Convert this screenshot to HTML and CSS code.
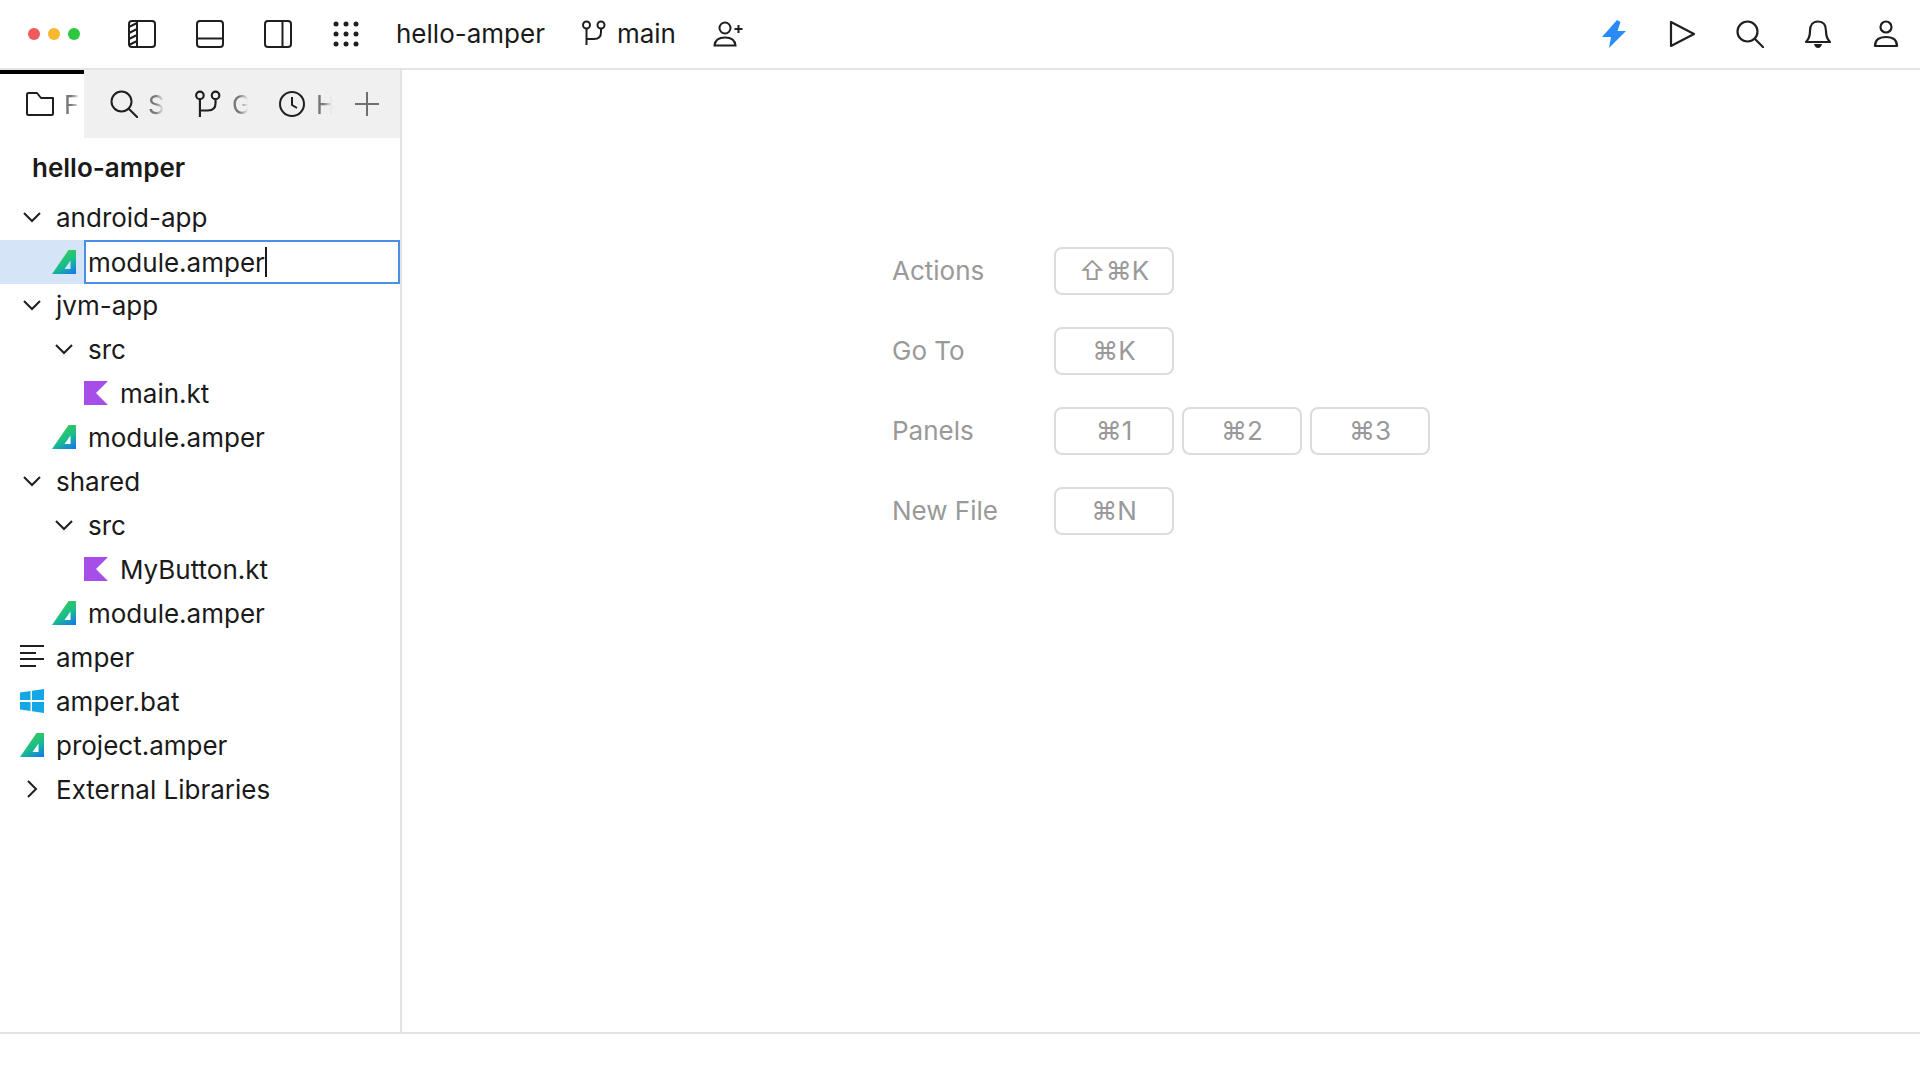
FILE: index.html
```html
<!DOCTYPE html>
<html lang="en">
<head>
<meta charset="utf-8">
<title>hello-amper</title>
<link rel="stylesheet" href="styles.css">
</head>
<body>
<svg class="defs" width="0" height="0" aria-hidden="true">
  <defs>
    <linearGradient id="amp" x1="0.35" y1="0.1" x2="0.9" y2="1">
      <stop offset="0" stop-color="#3ccb55"/>
      <stop offset="0.5" stop-color="#18bd8c"/>
      <stop offset="1" stop-color="#1578f2"/>
    </linearGradient>
    <symbol id="amper" viewBox="0 0 24 24"><path fill="url(#amp)" fill-rule="evenodd" d="M0 24 16.500 0H24V24ZM12.500 19H18.500V10.500Z"/></symbol>
    <symbol id="kotlin" viewBox="0 0 24 24"><path fill="#a64fe8" d="M0 0H24L12 12 24 24H0Z"/></symbol>
    <symbol id="down" viewBox="0 0 24 24"><path fill="none" stroke="#1f1f1f" stroke-width="2" d="M4 8 12 16 20 8"/></symbol>
    <symbol id="right" viewBox="0 0 24 24"><path fill="none" stroke="#1f1f1f" stroke-width="2" d="M8 4 16 12 8 20"/></symbol>
    <symbol id="branch" viewBox="0 0 26 26"><g fill="none" stroke="#1f1f1f" stroke-width="2"><circle cx="5.500" cy="5" r="3.500"/><circle cx="20" cy="5" r="3.500"/><path d="M5.500 8.500V25M5.500 19H13Q20 19 20 12V8.500"/></g></symbol>
  </defs>
</svg>
<div class="app">
  <header class="titlebar">
    <div class="lights"><i class="light red"></i><i class="light amber"></i><i class="light green"></i></div>
    <div class="panel-icons">
      <svg class="ico" viewBox="0 0 28 28"><g fill="none" stroke="#1f1f1f" stroke-width="2"><rect x="1" y="1" width="26" height="26" rx="3"/><path d="M9 1V27M1 7 9 3M1 13 9 9M1 19 9 15M1 25 9 21"/></g></svg>
      <svg class="ico" viewBox="0 0 28 28"><g fill="none" stroke="#1f1f1f" stroke-width="2"><rect x="1" y="1" width="26" height="26" rx="3"/><path d="M1 18.500H27"/></g></svg>
      <svg class="ico" viewBox="0 0 28 28"><g fill="none" stroke="#1f1f1f" stroke-width="2"><rect x="1" y="1" width="26" height="26" rx="3"/><path d="M18.500 1V27"/></g></svg>
      <svg class="ico" viewBox="0 0 28 28"><g fill="#1f1f1f"><circle cx="4" cy="4" r="2.500"/><circle cx="14" cy="4" r="2.500"/><circle cx="24" cy="4" r="2.500"/><circle cx="4" cy="14" r="2.500"/><circle cx="14" cy="14" r="2.500"/><circle cx="24" cy="14" r="2.500"/><circle cx="4" cy="24" r="2.500"/><circle cx="14" cy="24" r="2.500"/><circle cx="24" cy="24" r="2.500"/></g></svg>
    </div>
    <span class="project">hello-amper</span>
    <span class="branch"><svg class="ico-branch"><use href="#branch"/></svg>main</span>
    <svg class="ico add-user" viewBox="0 0 32 28"><g fill="none" stroke="#1f1f1f" stroke-width="2"><circle cx="12" cy="8" r="5.500"/><path d="M1.500 25.500C2 20 6 17.500 12 17.500 18 17.500 22 20 22.500 25.500ZM25.500 5V13M21.500 9H29.500"/></g></svg>
    <div class="spacer"></div>
    <div class="tools">
      <svg class="ico" viewBox="0 0 28 28"><path fill="#2a8af6" d="M17 0 2 17H11L9 28 26 11H17.500L20.500 2Z"/></svg>
      <svg class="ico" viewBox="0 0 28 28"><path fill="none" stroke="#1f1f1f" stroke-width="2.200" stroke-linejoin="round" d="M3 2V26L26 14Z"/></svg>
      <svg class="ico" viewBox="0 0 28 28"><g fill="none" stroke="#1f1f1f" stroke-width="2.200"><circle cx="11.500" cy="11.500" r="10"/><path d="M18.500 18.500 28 28"/></g></svg>
      <svg class="ico" viewBox="0 0 28 28"><path fill="none" stroke="#1f1f1f" stroke-width="2.200" stroke-linejoin="round" d="M2 22C5 19 6 16 6 11 6 5 9 1.500 14 1.500S22 5 22 11C22 16 23 19 26 22Z"/><path fill="#1f1f1f" d="M10 24H18Q17 28 14 28T10 24Z"/></svg>
      <svg class="ico" viewBox="0 0 28 28"><g fill="none" stroke="#1f1f1f" stroke-width="2.200"><circle cx="14" cy="7" r="5.500"/><path d="M3 26C3 20 7 17 14 17S25 20 25 26Z" stroke-linejoin="round"/></g></svg>
    </div>
  </header>

  <main class="workspace">
    <aside class="sidebar">
      <nav class="tabs">
        <div class="tab active">
          <svg class="tab-ico" viewBox="0 0 28 28"><path fill="none" stroke="#1f1f1f" stroke-width="2" stroke-linejoin="round" d="M1 4.500Q1 3 2.500 3H11L15 8H27V24Q27 25 25.500 25H2.500Q1 25 1 24Z"/></svg>
          <span class="tab-label">Files</span>
        </div>
        <div class="tab">
          <svg class="tab-ico search" viewBox="0 0 28 28"><g fill="none" stroke="#1f1f1f" stroke-width="2"><circle cx="11.500" cy="11.500" r="10"/><path d="M18.500 18.500 28 28"/></g></svg>
          <span class="tab-label">Search</span>
        </div>
        <div class="tab">
          <svg class="tab-ico"><use href="#branch"/></svg>
          <span class="tab-label">Git</span>
        </div>
        <div class="tab">
          <svg class="tab-ico" viewBox="0 0 28 28"><g fill="none" stroke="#1f1f1f" stroke-width="2"><circle cx="14" cy="14" r="12"/><path d="M14 7V15L19 18"/></g></svg>
          <span class="tab-label">History</span>
        </div>
        <svg class="plus" viewBox="0 0 24 24"><path fill="none" stroke="#6f6f6f" stroke-width="2" d="M12 0V24M0 12H24"/></svg>
      </nav>
      <div class="root-name">hello-amper</div>
      <ul class="tree">
        <li class="row"><svg class="icon chev"><use href="#down"/></svg><span>android-app</span></li>
        <li class="row selected l1"><svg class="icon"><use href="#amper"/></svg><span class="edit">module.amper<i class="caret"></i></span></li>
        <li class="row"><svg class="icon chev"><use href="#down"/></svg><span>jvm-app</span></li>
        <li class="row l1"><svg class="icon chev"><use href="#down"/></svg><span>src</span></li>
        <li class="row l2"><svg class="icon"><use href="#kotlin"/></svg><span>main.kt</span></li>
        <li class="row l1"><svg class="icon"><use href="#amper"/></svg><span>module.amper</span></li>
        <li class="row"><svg class="icon chev"><use href="#down"/></svg><span>shared</span></li>
        <li class="row l1"><svg class="icon chev"><use href="#down"/></svg><span>src</span></li>
        <li class="row l2"><svg class="icon"><use href="#kotlin"/></svg><span>MyButton.kt</span></li>
        <li class="row l1"><svg class="icon"><use href="#amper"/></svg><span>module.amper</span></li>
        <li class="row"><svg class="icon" viewBox="0 0 24 24"><path fill="none" stroke="#1f1f1f" stroke-width="2" d="M0 1H24M0 8H16M0 14H24M0 21H16"/></svg><span>amper</span></li>
        <li class="row"><svg class="icon" viewBox="0 0 24 24"><path fill="#14a7e6" d="M0 3.500 10.500 2V11H0ZM12 1.800 24 0V11H12ZM0 13H10.500V22L0 20.500ZM12 13H24V24L12 22.200Z"/></svg><span>amper.bat</span></li>
        <li class="row"><svg class="icon"><use href="#amper"/></svg><span>project.amper</span></li>
        <li class="row"><svg class="icon chev"><use href="#right"/></svg><span>External Libraries</span></li>
      </ul>
    </aside>
    <section class="editor">
      <div class="hints">
        <div class="hint"><span class="hint-label">Actions</span><div class="keys"><kbd>⇧⌘K</kbd></div></div>
        <div class="hint"><span class="hint-label">Go To</span><div class="keys"><kbd>⌘K</kbd></div></div>
        <div class="hint"><span class="hint-label">Panels</span><div class="keys"><kbd>⌘1</kbd><kbd>⌘2</kbd><kbd>⌘3</kbd></div></div>
        <div class="hint"><span class="hint-label">New File</span><div class="keys"><kbd>⌘N</kbd></div></div>
      </div>
    </section>
  </main>
  <footer class="statusbar"></footer>
</div>
</body>
</html>
```
FILE: styles.css
```css
* { box-sizing: border-box; }
html, body { margin: 0; height: 100%; }
body {
  background: #fff;
  color: #1a1a1a;
  font-family: Inter, "Liberation Sans", "DejaVu Sans", sans-serif;
  font-size: 26px;
  overflow: hidden;
}
.defs { position: absolute; }
.app { display: flex; flex-direction: column; height: 1080px; }

.titlebar {
  display: flex;
  align-items: center;
  height: 70px;
  flex: none;
  border-bottom: 2px solid #e4e4e4;
  padding: 0 20px 0 28px;
}
.lights { display: flex; gap: 8px; width: 100px; }
.light { width: 12px; height: 12px; border-radius: 50%; }
.red { background: #f2595a; }
.amber { background: #f5b82e; }
.green { background: #2bc840; }
.panel-icons { display: flex; gap: 40px; margin-right: 36px; }
.ico { width: 28px; height: 28px; display: block; flex: none; }
.project { margin-right: 36px; padding-bottom: 2px; }
.branch { display: flex; align-items: center; gap: 10px; margin-right: 37px; padding-bottom: 2px; }
.ico-branch { width: 26px; height: 26px; }
.add-user { width: 32px; }
.spacer { flex: 1; }
.tools { display: flex; gap: 40px; }

.workspace { display: flex; flex: 1; min-height: 0; }
.sidebar { width: 402px; flex: none; border-right: 2px solid #e4e4e4; }
.tabs { display: flex; align-items: center; height: 68px; background: #f0f0f0; }
.tab {
  display: flex;
  align-items: center;
  gap: 10px;
  width: 84px;
  height: 100%;
  padding-left: 26px;
  flex: none;
}
.tab.active { background: #fff; border-top: 4px solid #000; }
.tab.active .tab-ico, .tab.active .tab-label { margin-top: -4px; }
.tab-ico { width: 28px; height: 28px; flex: none; }
.tab-label {
  width: 20px;
  overflow: hidden;
  color: #777;
  white-space: nowrap;
  -webkit-mask-image: linear-gradient(90deg, #000 35%, transparent 80%);
  mask-image: linear-gradient(90deg, #000 35%, transparent 80%);
}
.plus { width: 24px; height: 24px; margin-left: 19px; flex: none; }

.root-name { font-weight: 600; padding: 12px 0 0 32px; height: 57px; line-height: 36px; }
.tree { list-style: none; margin: 0; padding: 0; }
.row { display: flex; align-items: center; gap: 12px; height: 44px; padding-left: 20px; white-space: nowrap; }
.row.l1 { padding-left: 52px; }
.row.l2 { padding-left: 84px; }
.row.selected { gap: 8px; margin-top: 1px; margin-bottom: -1px; }
.icon { width: 24px; height: 24px; flex: none; }
.selected { background: #d6e4f7; }
.edit {
  display: flex;
  align-items: center;
  height: 44px;
  width: 316px;
  padding-left: 2px;
  background: #fff;
  border: 2px solid #4a90e2;
}
.caret { width: 2px; height: 30px; background: #1a1a1a; }

.editor { flex: 1; display: flex; justify-content: center; padding-top: 177px; }
.hints { width: 538px; display: flex; flex-direction: column; gap: 32px; }
.hint { display: flex; align-items: center; height: 48px; color: #999; }
.hint-label { width: 162px; flex: none; padding-bottom: 2px; }
.keys { display: flex; gap: 8px; }
kbd {
  display: flex;
  align-items: center;
  justify-content: center;
  width: 120px;
  height: 48px;
  padding-bottom: 2px;
  border: 2px solid #dcdcdc;
  border-radius: 8px;
  font-family: inherit;
  font-size: 26px;
  color: #999;
}
.statusbar { height: 48px; flex: none; border-top: 2px solid #e4e4e4; }
```
